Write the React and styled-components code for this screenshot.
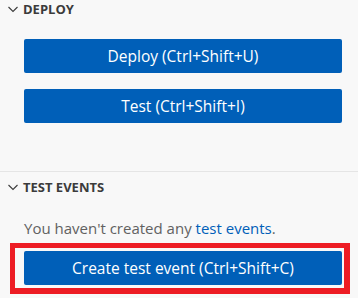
import React from "react";
import styled, { createGlobalStyle } from "styled-components";

const GlobalStyle = createGlobalStyle`
  html, body {
    margin: 0;
    padding: 0;
    background: #f8f8f8;
  }
  body {
    font-family: "Open Sans", "Noto Sans", sans-serif;
    color: #3b3b3b;
  }
`;

const Panel = styled.div`
  width: 358px;
  height: 298px;
  background: #f8f8f8;
  overflow: hidden;
  display: flex;
  flex-direction: column;
`;

const Section = styled.section`
  display: flex;
  flex-direction: column;
  margin-top: ${(p) => p.$offset || 0}px;
  border-top: ${(p) => (p.$divided ? "1px solid #e5e5e5" : "none")};
`;

const Header = styled.div`
  height: ${(p) => p.$height}px;
  display: flex;
  align-items: center;
  gap: 4px;
  padding-left: 7px;
  font-size: 13px;
  font-weight: 700;
  color: #3b3b3b;
`;

const Chevron = styled.svg`
  width: 12px;
  height: 12px;
  flex: none;
`;

const Body = styled.div`
  display: flex;
  flex-direction: column;
  gap: ${(p) => p.$gap || 0}px;
  padding: ${(p) => p.$pad};
`;

const Button = styled.button`
  height: 34px;
  width: 318px;
  margin-left: ${(p) => p.$inset ?? 24}px;
  border: none;
  border-radius: 2px;
  background: #005fb8;
  color: #ffffff;
  font-family: "Open Sans", "Noto Sans", sans-serif;
  font-size: 15.5px;
  padding: 0;
  display: flex;
  align-items: center;
  justify-content: center;
  cursor: pointer;
`;

const Message = styled.p`
  margin: 0 0 0 24px;
  font-size: 15px;
  color: #616161;
  line-height: 20px;
`;

const Link = styled.a`
  color: #005fb8;
  text-decoration: none;
`;

const Highlight = styled.div`
  margin-left: 10px;
  width: 340px;
  height: 51px;
  box-sizing: border-box;
  border: 5px solid #ed1c24;
  border-bottom-width: 6px;
  border-right-width: 6px;
  display: flex;
  align-items: center;
`;

const ChevronIcon = () => (
  <Chevron viewBox="0 0 12 12">
    <path d="M1.5 4 L6 8.5 L10.5 4" fill="none" stroke="#3b3b3b" strokeWidth="1.1" />
  </Chevron>
);

export default function App() {
  return (
    <Panel>
      <GlobalStyle />
      <Section>
        <Header $height={18}>
          <ChevronIcon />
          DEPLOY
        </Header>
        <Body $gap={16} $pad="21px 0 0 0">
          <Button>Deploy (Ctrl+Shift+U)</Button>
          <Button>Test (Ctrl+Shift+I)</Button>
        </Body>
      </Section>
      <Section $divided $offset={48}>
        <Header $height={30}>
          <ChevronIcon />
          TEST EVENTS
        </Header>
        <Body $pad="16px 0 0 0">
          <Message>
            You haven&apos;t created any <Link>test events</Link>.
          </Message>
        </Body>
        <Body $pad="5px 0 0 0">
          <Highlight>
            <Button $inset={9}>Create test event (Ctrl+Shift+C)</Button>
          </Highlight>
        </Body>
      </Section>
    </Panel>
  );
}
